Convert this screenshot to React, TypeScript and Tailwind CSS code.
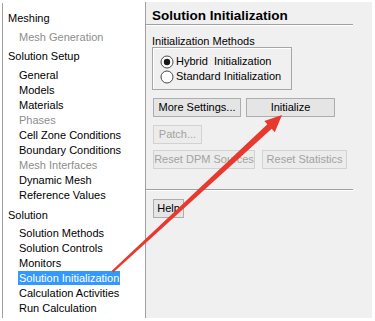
const font = { fontFamily: '"Liberation Sans", Arial, sans-serif' };

type NavItem = { label: string; disabled?: boolean; selected?: boolean };

const sections: { title: string; gap: string; items: NavItem[] }[] = [
  { title: "Meshing", gap: "mt-0", items: [{ label: "Mesh Generation", disabled: true }] },
  {
    title: "Solution Setup",
    gap: "mt-[4px]",
    items: [
      { label: "General" },
      { label: "Models" },
      { label: "Materials" },
      { label: "Phases", disabled: true },
      { label: "Cell Zone Conditions" },
      { label: "Boundary Conditions" },
      { label: "Mesh Interfaces", disabled: true },
      { label: "Dynamic Mesh" },
      { label: "Reference Values" },
    ],
  },
  {
    title: "Solution",
    gap: "mt-[5px]",
    items: [
      { label: "Solution Methods" },
      { label: "Solution Controls" },
      { label: "Monitors" },
      { label: "Solution Initialization", selected: true },
      { label: "Calculation Activities" },
      { label: "Run Calculation" },
    ],
  },
];

const Btn = ({ label, w, disabled }: { label: string; w: string; disabled?: boolean }) => (
  <div
    className={`${w} h-[19px] flex items-center justify-center border text-[11px] leading-none ${
      disabled ? "border-[#d2d2d2] bg-[#ececec] text-[#a2a2a2]" : "border-[#adadad] bg-[#e5e5e5] text-black"
    }`}
  >
    {label}
  </div>
);

const Radio = ({ checked, label }: { checked?: boolean; label: string }) => (
  <div className="flex h-[15px] items-center">
    <svg width="14" height="14" viewBox="0 0 14 14">
      <circle cx="7" cy="7" r="6" fill="#fff" stroke="#4a4a4a" strokeWidth="1" />
      {checked && <circle cx="7" cy="7" r="3.2" fill="#1a1a1a" />}
    </svg>
    <span className="ml-[2px] text-[11px] text-black whitespace-pre">{label}</span>
  </div>
);

const Separator = () => (
  <div className="w-[207px]">
    <div className="h-px bg-[#a0a0a0]" />
    <div className="h-px bg-white" />
  </div>
);

export default function App() {
  return (
    <div className="relative w-[375px] h-[321px] bg-white overflow-hidden" style={font}>
      <div className="flex items-start pl-[2px] pt-[2px]">
        {/* navigation tree */}
        <div className="mt-px h-[315px] w-[143px] border-l border-[#a0a0a0] pl-[5px] pt-[8px] text-[11px] leading-[15px] text-black">
          {sections.map((s) => (
            <div key={s.title} className={s.gap}>
              <div className="h-[15px]">{s.title}</div>
              <div className={s.title === "Solution" ? "mt-[3px]" : "mt-[4px]"}>
                {s.items.map((it) => (
                  <div key={it.label} className="h-[15px] pl-[11px]">
                    {it.selected ? (
                      <span className="-ml-px inline-block bg-[#3399ff] px-px leading-[14px] text-white">{it.label}</span>
                    ) : (
                      <span className={it.disabled ? "text-[#8d8d8d]" : ""}>{it.label}</span>
                    )}
                  </div>
                ))}
              </div>
            </div>
          ))}
        </div>

        {/* task page */}
        <div className="h-[316px] w-[227px] border-l border-[#a0a0a0] bg-[#f0f0f0]">
          <div className="flex h-[22px] items-end pl-[6px] pb-[2px] text-[13.5px] font-bold leading-none text-black">
            Solution Initialization
          </div>
          <Separator />
          <div className="pl-[6px]">
            <div className="mt-[9px] h-[13px] text-[11px] leading-[13px] text-black">Initialization Methods</div>
            <div className="mt-[-1px] h-[43px] w-[140px] border border-[#a6a6a6] pl-[7px] pt-[6px] shadow-[inset_1px_1px_0_#fff]">
              <Radio checked label="Hybrid  Initialization" />
              <Radio label="Standard Initialization" />
            </div>
            <div className="ml-px mt-[8px] flex gap-[5px]">
              <Btn label="More Settings..." w="w-[88px]" />
              <Btn label="Initialize" w="w-[89px]" />
            </div>
            <div className="ml-px mt-[8px]">
              <Btn label="Patch..." w="w-[49px]" disabled />
            </div>
            <div className="ml-px mt-[6px] flex gap-[7px]">
              <Btn label="Reset DPM Sources" w="w-[102px]" disabled />
              <Btn label="Reset Statistics" w="w-[85px]" disabled />
            </div>
          </div>
          <div className="mt-[20px]">
            <Separator />
          </div>
          <div className="ml-[7px] mt-[8px]">
            <Btn label="Help" w="w-[31px]" />
          </div>
        </div>
      </div>

      {/* red annotation arrow */}
      <svg className="pointer-events-none absolute inset-0" width="375" height="321" viewBox="0 0 375 321">
        <polygon
          points="111.8,270.8 267.4,124.3 264.3,120.9 282,115 274.8,132.2 271.7,128.8 113.2,272.4"
          fill="#e8392f"
        />
      </svg>
    </div>
  );
}
